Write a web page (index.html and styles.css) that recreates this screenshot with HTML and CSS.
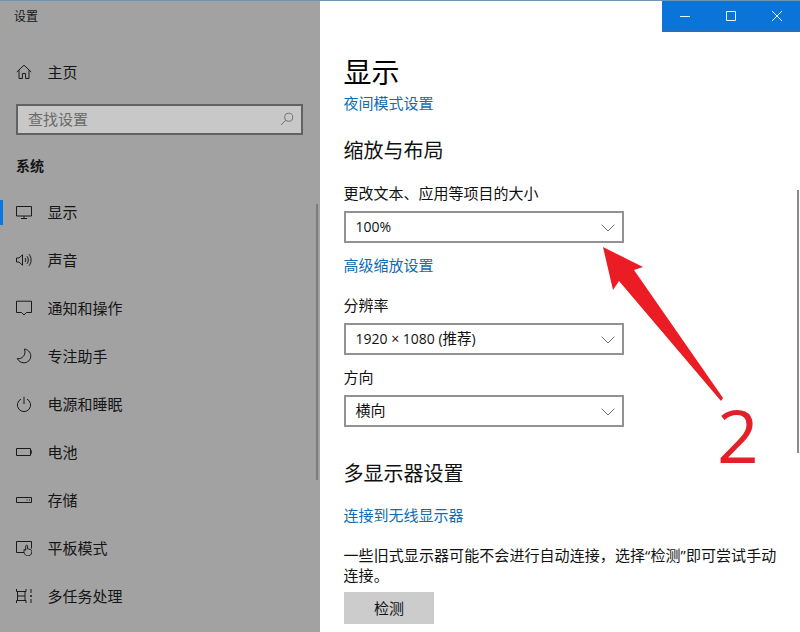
FILE: index.html
```html
<!DOCTYPE html>
<html lang="zh-CN">
<head>
<meta charset="utf-8">
<title>设置</title>
<link rel="stylesheet" href="styles.css">
</head>
<body>
<div class="app">
  <aside class="sidebar">
    <div class="app-title">设置</div>
    <a class="nav-item home">
      <svg class="nav-icon" viewBox="0 0 16 16"><path d="M.8 8 8 1.2 15.2 8M3 6.2V14.5H6.4V9.5H9.6V14.5H13V6.2"/></svg>
      <span>主页</span>
    </a>
    <div class="search">
      <span>查找设置</span>
      <svg class="search-icon" viewBox="0 0 16 16"><circle cx="10" cy="6" r="4.6"/><path d="M6.7 9.3 1.2 14.8"/></svg>
    </div>
    <div class="section-name">系统</div>
    <nav class="nav-list">
      <a class="nav-item active">
        <svg class="nav-icon" viewBox="0 0 16 16"><path d="M.5 2.5H15.5V12H.5ZM8 12V14.5M5 14.5H11"/></svg>
        <span>显示</span>
      </a>
      <a class="nav-item">
        <svg class="nav-icon" viewBox="0 0 16 16"><path d="M.5 6H3L6.5 2.8V13.2L3 10H.5ZM9 6C10 7.2 10 8.8 9 10M11 4.2C12.8 6.4 12.8 9.6 11 11.8M13 2.2C15.8 5.5 15.8 10.5 13 13.8"/></svg>
        <span>声音</span>
      </a>
      <a class="nav-item">
        <svg class="nav-icon" viewBox="0 0 16 16"><path d="M.5 1.2H15.5V12.5H10.5L8 15 5.5 12.5H.5Z"/></svg>
        <span>通知和操作</span>
      </a>
      <a class="nav-item">
        <svg class="nav-icon" viewBox="0 0 16 16"><path d="M8.5 1C11 1.4 14.8 3.5 14.8 8.2A6.6 6.6 0 0 1 8.2 14.8C5 14.8 2.6 13.2 1.2 10.6 6 11.5 10.5 7 8.5 1Z"/></svg>
        <span>专注助手</span>
      </a>
      <a class="nav-item">
        <svg class="nav-icon" viewBox="0 0 16 16"><path d="M5 3.1A6.6 6.6 0 1 0 11 3.1M8 .8V8"/></svg>
        <span>电源和睡眠</span>
      </a>
      <a class="nav-item">
        <svg class="nav-icon" viewBox="0 0 16 16"><path d="M.5 4.5H14.5V11.5H.5ZM14.5 6.8H15.8V9.2H14.5"/></svg>
        <span>电池</span>
      </a>
      <a class="nav-item">
        <svg class="nav-icon" viewBox="0 0 16 16"><path d="M.5 5.5H15.5V10.5H.5ZM10.5 8H11.5M13 8H14"/></svg>
        <span>存储</span>
      </a>
      <a class="nav-item">
        <svg class="nav-icon" viewBox="0 0 16 16"><path d="M8 12.5H.5V1.5H15.5V8.5M9.8 15.2C8.6 14 8 13 8 11.5V9.5L9.7 10.2V6.2C9.7 4.9 11.6 4.9 11.6 6.2V8.8L14.2 9.4C15.4 9.7 15.8 10.3 15.8 11.4 15.8 13.5 15 15.3 13 15.8 11.8 16 10.6 15.9 9.8 15.2Z"/></svg>
        <span>平板模式</span>
      </a>
      <a class="nav-item">
        <svg class="nav-icon" viewBox="0 0 16 16"><path d="M.5 1V3.5H10V1M.5 15V12.5H10V15M1.5 3.5V12.5M9 3.5V12.5M1.5 8H9M15 1V5M15 11V15"/><circle class="dot" cx="15" cy="8" r="1"/></svg>
        <span>多任务处理</span>
      </a>
    </nav>
    <div class="sidebar-scroll"></div>
  </aside>

  <main class="content">
    <h1 class="page-title">显示</h1>
    <a class="link night-link">夜间模式设置</a>
    <h2 class="group-title scale-title">缩放与布局</h2>
    <label class="field-label size-label">更改文本、应用等项目的大小</label>
    <div class="select">
      <span class="latin">100%</span>
      <svg class="chev" viewBox="0 0 14 8"><path d="M.7.7 7 7 13.3.7"/></svg>
    </div>
    <a class="link adv-link">高级缩放设置</a>
    <label class="field-label res-label">分辨率</label>
    <div class="select">
      <span class="latin">1920 × 1080 (<span class="cjk">推荐</span>)</span>
      <svg class="chev" viewBox="0 0 14 8"><path d="M.7.7 7 7 13.3.7"/></svg>
    </div>
    <label class="field-label dir-label">方向</label>
    <div class="select">
      <span class="plain">横向</span>
      <svg class="chev" viewBox="0 0 14 8"><path d="M.7.7 7 7 13.3.7"/></svg>
    </div>
    <h2 class="group-title multi-title">多显示器设置</h2>
    <a class="link wireless-link">连接到无线显示器</a>
    <p class="note">一些旧式显示器可能不会进行自动连接，选择“检测”即可尝试手动连接。</p>
    <div class="detect">检测</div>
    <div class="content-scroll"></div>
  </main>
</div>

<div class="win-controls">
  <svg class="win-icon" viewBox="0 0 12 12"><path d="M1 6.5H11"/></svg>
  <svg class="win-icon" viewBox="0 0 12 12"><path d="M1.5 1.5H10.5V10.5H1.5Z"/></svg>
  <svg class="win-icon" viewBox="0 0 12 12"><path d="M1 1 11 11M11 1 1 11"/></svg>
</div>

<svg class="arrow" viewBox="0 0 800 632"><polygon points="603,247 643,267 634,270 723,398 721,401 619,281 613,290"/></svg>
<div class="badge">2</div>
</body>
</html>
```

FILE: styles.css
```css
* { box-sizing: border-box; }
html, body { margin: 0; height: 100%; overflow: hidden; }
body {
  position: relative;
  width: 800px;
  height: 632px;
  background: #fff;
  color: #111;
  font-family: "Open Sans", "Noto Sans CJK SC", sans-serif;
  font-size: 15px;
}
.app {
  display: flex;
  height: 632px;
  border-top: 1px solid #6f93b3;
}
.sidebar {
  position: relative;
  flex: 0 0 320px;
  background: #a2a2a2;
  color: #151515;
}
.app-title {
  height: 31px;
  padding-left: 14px;
  font-size: 12px;
  line-height: 32px;
}
.nav-item {
  display: flex;
  align-items: center;
  height: 48px;
  padding-left: 16px;
  line-height: 20px;
}
.nav-item span { margin-left: 15.5px; }
.nav-item.home { height: 48px; margin-top: 16px; }
.nav-icon {
  flex: none;
  width: 16px;
  height: 16px;
  fill: none;
  stroke: #1a1a1a;
  stroke-width: 1;
}
.nav-icon .dot { fill: #1a1a1a; stroke: none; }
.search {
  display: flex;
  align-items: center;
  justify-content: space-between;
  width: 287px;
  height: 31px;
  margin: 8px 0 0 16px;
  padding: 0 7px 2px 10px;
  border: 2px solid #626262;
  background: #c8c8c8;
  color: #6a6a6a;
}
.search-icon {
  width: 14px;
  height: 14px;
  fill: none;
  stroke: #666;
  stroke-width: 1;
}
.section-name {
  height: 20px;
  margin: 21px 0 0 16px;
  font-size: 14px;
  font-weight: 700;
  line-height: 20px;
}
.nav-list { margin-top: 12px; }
.active { position: relative; }
.active::before {
  content: "";
  position: absolute;
  left: 0;
  top: 12px;
  width: 3px;
  height: 25px;
  background: #0a78e0;
}
.sidebar-scroll {
  position: absolute;
  left: 316px;
  top: 203px;
  width: 2px;
  height: 276px;
  background: #7c7c7c;
}
.content {
  position: relative;
  flex: 1;
  padding-left: 23.5px;
}
.page-title {
  margin: 51px 0 0;
  font-size: 28px;
  font-weight: 400;
  line-height: 40px;
  color: #000;
}
.link {
  display: block;
  color: #0f6cb0;
  line-height: 20px;
}
.night-link { margin-top: 1px; }
.group-title {
  margin: 0;
  font-size: 20px;
  font-weight: 400;
  line-height: 28px;
  color: #111;
}
.scale-title { margin-top: 24px; }
.field-label { display: block; line-height: 20px; }
.size-label { margin-top: 18px; margin-bottom: 8px; }
.res-label { margin-top: 20px; margin-bottom: 8px; }
.dir-label { margin-top: 12px; margin-bottom: 8px; }
.select {
  display: flex;
  align-items: center;
  justify-content: space-between;
  width: 280px;
  height: 32px;
  margin-left: 0.5px;
  padding: 0 7px 0 9.5px;
  border: 2px solid #929292;
  background: #fff;
}
.latin { font-size: 14px; line-height: 20px; }
.latin .cjk { font-size: 14.5px; }
.plain { line-height: 20px; position: relative; top: -1px; }
.chev {
  position: relative;
  top: 1px;
  width: 14px;
  height: 8px;
  fill: none;
  stroke: #6e6e6e;
  stroke-width: 1;
}
.adv-link { margin-top: 12px; }
.multi-title { margin-top: 33px; }
.wireless-link { margin-top: 17px; }
.note {
  width: 440px;
  margin: 20px 0 0;
  line-height: 20px;
  letter-spacing: 0.08px;
}
.detect {
  width: 90px;
  height: 32px;
  margin: 7px 0 0 0.5px;
  background: #cccccc;
  line-height: 32px;
  text-align: center;
}
.content-scroll {
  position: absolute;
  left: 477px;
  top: 189px;
  width: 2px;
  height: 263px;
  background: #8a8a8a;
}
.win-controls {
  position: absolute;
  top: 1px;
  right: 0;
  display: flex;
  width: 138px;
  height: 31px;
  background: #0b74d8;
  border-bottom: 2px solid #2f6db3;
}
.win-icon {
  flex: 1;
  width: 12px;
  height: 12px;
  margin: 9px 0 0;
  fill: none;
  stroke: #e8f4ff;
  stroke-width: 1;
}
.arrow {
  position: absolute;
  left: 0;
  top: 0;
  width: 800px;
  height: 632px;
  pointer-events: none;
}
.arrow polygon { fill: #ec1c24; }
.badge {
  position: absolute;
  left: 717px;
  top: 390px;
  color: #e32028;
  font-family: "Open Sans", sans-serif;
  font-size: 73px;
  line-height: 90px;
}
```
